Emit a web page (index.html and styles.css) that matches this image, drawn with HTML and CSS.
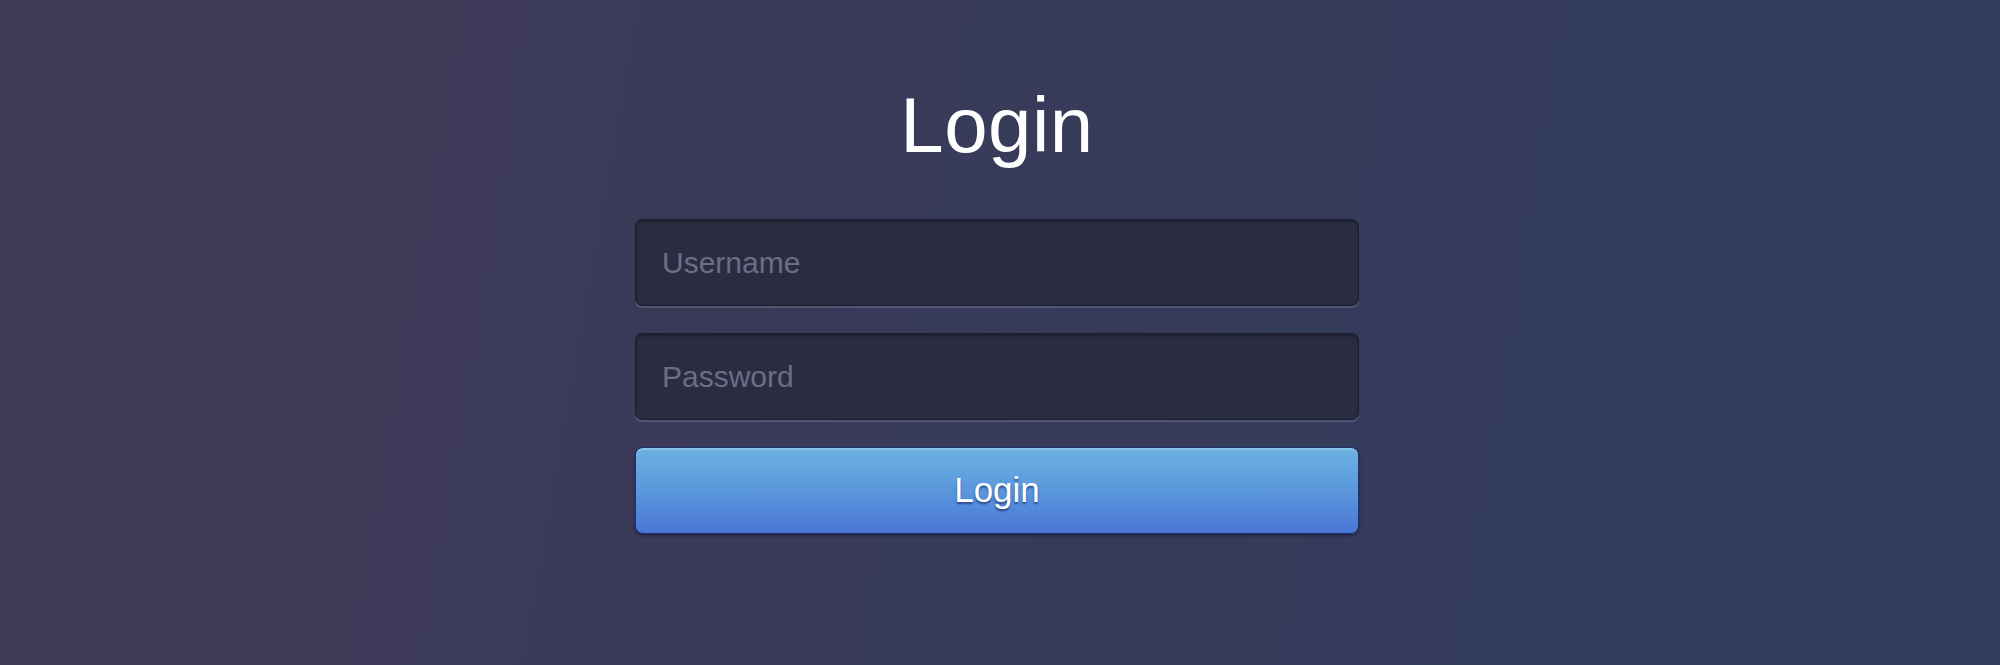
FILE: index.html
```html
<!DOCTYPE html>
<html lang="en">
<head>
<meta charset="utf-8">
<title>Login</title>
<link rel="stylesheet" href="styles.css">
</head>
<body>
<main class="page">
  <form class="login-form" onsubmit="return false;">
    <h1 class="login-title">Login</h1>
    <div class="fields">
      <input class="field" type="text" placeholder="Username">
      <input class="field" type="password" placeholder="Password">
      <button class="login-button" type="submit">Login</button>
    </div>
  </form>
</main>
</body>
</html>
```

FILE: styles.css
```css
html, body {
  margin: 0;
  padding: 0;
  height: 100%;
}

body {
  font-family: "Liberation Sans", Arial, Helvetica, sans-serif;
  background: linear-gradient(100deg, #403a57 0%, #3a3a58 35%, #353b5b 65%, #303c5e 100%);
  color: #ffffff;
  overflow: hidden;
}

.page {
  height: 665px;
  display: flex;
  justify-content: center;
  padding-right: 6px;
  box-sizing: border-box;
}

.login-form {
  width: 724px;
  padding-top: 86px;
  display: flex;
  flex-direction: column;
  align-items: stretch;
}

.login-title {
  margin: 0 0 55px 0;
  font-size: 78px;
  line-height: 78px;
  font-weight: 400;
  text-align: center;
  color: #ffffff;
  letter-spacing: 0.5px;
}

.fields {
  display: flex;
  flex-direction: column;
  gap: 27px;
}

.field {
  box-sizing: border-box;
  height: 87px;
  width: 100%;
  margin: 0;
  padding: 0 0 0 26px;
  border: 1px solid #1b1c2d;
  border-radius: 7px;
  background: #2a2c42;
  color: #d8d9e6;
  font-family: "Liberation Sans", Arial, Helvetica, sans-serif;
  font-size: 30px;
  outline: none;
  box-shadow: inset 0 2px 3px rgba(0, 0, 0, 0.25), 0 2px 0 rgba(120, 124, 160, 0.4);
}

.field::placeholder {
  color: #6c6e86;
  opacity: 1;
}

.login-button {
  box-sizing: border-box;
  height: 87px;
  width: 100%;
  margin: 0;
  padding: 0 0 2px 0;
  border: 1px solid #1c3272;
  border-radius: 8px;
  background: linear-gradient(to bottom, #6cb1e2 0%, #5b97dc 50%, #4a76d6 100%);
  color: #ffffff;
  font-family: "Liberation Sans", Arial, Helvetica, sans-serif;
  font-size: 35px;
  text-shadow: 0 2px 2px rgba(15, 35, 95, 0.65);
  cursor: pointer;
  box-shadow: inset 0 2px 0 rgba(170, 215, 245, 0.45), 0 2px 3px rgba(10, 15, 40, 0.45);
}
```
